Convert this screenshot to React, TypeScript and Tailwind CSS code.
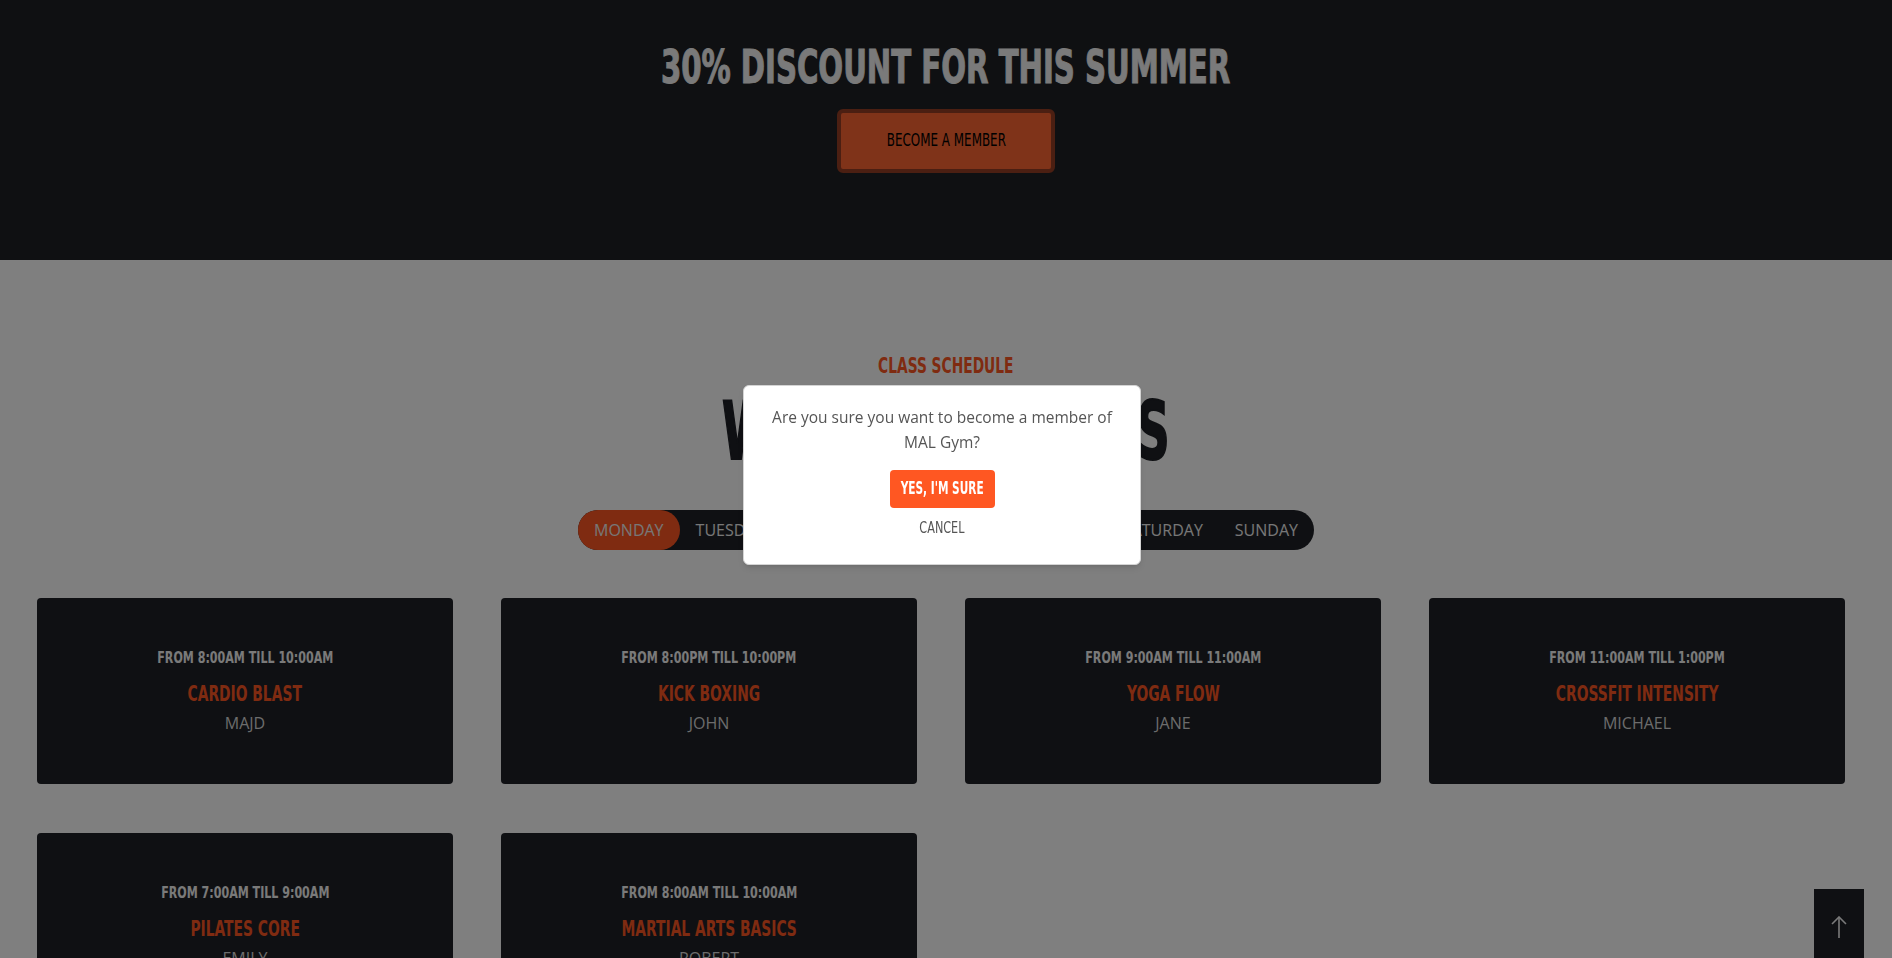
import React from "react";

const COND = "font-['DejaVu_Sans_Condensed','DejaVu_Sans',sans-serif]";
const BODY = "font-['Open_Sans',sans-serif]";

const days = ["MONDAY", "TUESDAY", "WEDNESDAY", "THURSDAY", "FRIDAY", "SATURDAY", "SUNDAY"];

const classes = [
  { time: "FROM 8:00AM TILL 10:00AM", name: "CARDIO BLAST", trainer: "MAJD" },
  { time: "FROM 8:00PM TILL 10:00PM", name: "KICK BOXING", trainer: "JOHN" },
  { time: "FROM 9:00AM TILL 11:00AM", name: "YOGA FLOW", trainer: "JANE" },
  { time: "FROM 11:00AM TILL 1:00PM", name: "CROSSFIT INTENSITY", trainer: "MICHAEL" },
  { time: "FROM 7:00AM TILL 9:00AM", name: "PILATES CORE", trainer: "EMILY" },
  { time: "FROM 8:00AM TILL 10:00AM", name: "MARTIAL ARTS BASICS", trainer: "ROBERT" },
];

export default function App() {
  return (
    <div className="relative min-h-screen bg-white">
      {/* Hero */}
      <section className="h-[260px] bg-[#1e2024] flex flex-col items-center">
        <h1 className={`${COND} mt-[44px] text-[47px] leading-[46px] font-bold text-[#f4f4f4] whitespace-nowrap`}>
          <span className="inline-block scale-x-[0.69] [-webkit-text-stroke:1px_#f4f4f4]">30% DISCOUNT FOR THIS SUMMER</span>
        </h1>
        <button className={`${COND} mt-[19px] w-[218px] h-[64px] rounded-[6px] border-4 border-[#963e24] bg-[#fe6632] text-black text-[17px] whitespace-nowrap flex items-center justify-center`}>
          <span className="inline-block scale-x-[0.78]">BECOME A MEMBER</span>
        </button>
      </section>

      {/* Schedule */}
      <section className="flex flex-col items-center pt-[93px]">
        <p className={`${COND} text-[21px] leading-[26px] font-bold text-[#ff5722] whitespace-nowrap`}>
          <span className="inline-block scale-x-[0.73]">CLASS SCHEDULE</span>
        </p>
        <h2 className={`${COND} mt-[13px] text-[80px] leading-[80px] font-bold text-[#1e2026] whitespace-nowrap`}>
          <span className="inline-block scale-x-[0.64] [-webkit-text-stroke:2px_#1e2026]">WEEKLY CLASSES</span>
        </h2>
        <div className={`${BODY} mt-[38px] h-[40px] flex items-stretch rounded-full bg-[#1e2026] text-[16px] text-[#eeeeee]`}>
          {days.map((d, i) => (
            <div
              key={d}
              className={`flex items-center px-4 rounded-full ${i === 0 ? "bg-[#ff5722]" : ""}`}
            >
              {d}
            </div>
          ))}
        </div>
      </section>

      <div className="ml-[37px] mt-[48px] w-[1808px] grid grid-cols-4 gap-x-12 gap-y-[49px]">
        {classes.map((c) => (
          <div key={c.name} className="h-[186px] rounded-[4px] bg-[#1e2026] flex flex-col items-center justify-center">
            <p className={`${COND} text-[16px] leading-[20px] font-bold text-[#f4f4f4] whitespace-nowrap`}>
              <span className="inline-block scale-x-[0.77]">{c.time}</span>
            </p>
            <p className={`${COND} mt-[13px] text-[22px] leading-[26px] font-bold text-[#ff5722] whitespace-nowrap`}>
              <span className="inline-block scale-x-[0.70]">{c.name}</span>
            </p>
            <p className={`${BODY} mt-[5px] text-[16px] leading-[22px] text-[#d8d8d8]`}>{c.trainer}</p>
          </div>
        ))}
      </div>

      {/* Scroll to top */}
      <button className="fixed left-[1814px] top-[889px] w-[50px] h-[80px] bg-[#1e2026] flex justify-center pt-[27px]">
        <svg width="16" height="24" viewBox="0 0 16 24" fill="none" stroke="#f4f4f4" strokeWidth="1.6">
          <path d="M1 8 L8 1 L15 8" />
          <path d="M8 1 V22" />
        </svg>
      </button>

      {/* Overlay */}
      <div className="fixed inset-0 bg-black/50 z-40" />

      {/* Modal */}
      <div className="fixed left-[743px] top-[385px] z-50 w-[398px] h-[180px] rounded-[6px] bg-white border border-[#d4d4d4] shadow-md flex flex-col items-center px-4 pt-[19px]">
        <p className={`${BODY} text-[15.5px] leading-[25px] text-[#555] text-center whitespace-nowrap`}>
          Are you sure you want to become a member of
          <br />
          MAL Gym?
        </p>
        <button className={`${COND} mt-[15px] w-[105px] h-[38px] rounded-[4px] bg-[#ff5722] text-white text-[17px] font-bold whitespace-nowrap flex items-center justify-center`}>
          <span className="inline-block scale-x-[0.69]">YES, I'M SURE</span>
        </button>
        <button className={`${COND} mt-[8px] text-[16px] leading-[24px] text-[#555] whitespace-nowrap`}>
          <span className="inline-block scale-x-[0.78]">CANCEL</span>
        </button>
      </div>
    </div>
  );
}
